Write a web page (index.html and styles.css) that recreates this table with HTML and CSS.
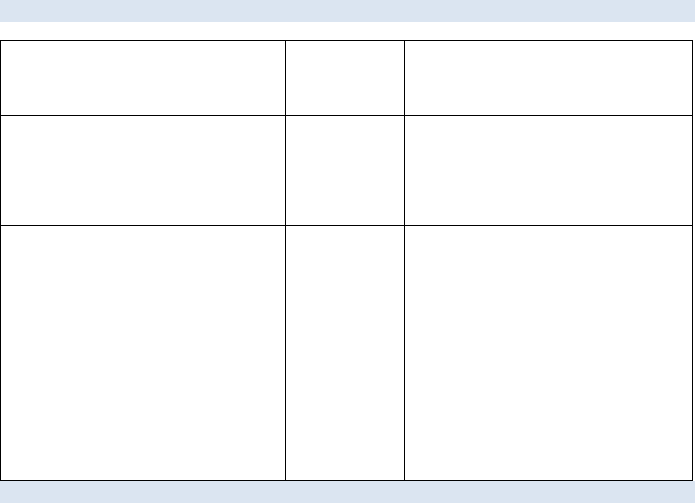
FILE: index.html
```html
<!DOCTYPE html>
<html>
<head>
<meta charset="utf-8">
<link rel="stylesheet" href="styles.css">
</head>
<body>
<div class="page">
  <div class="bar"></div>
  <main class="content">
    <table class="grid">
      <colgroup>
        <col class="c1"><col class="c2"><col class="c3">
      </colgroup>
      <tr class="r1"><td></td><td></td><td></td></tr>
      <tr class="r2"><td></td><td></td><td></td></tr>
      <tr class="r3"><td></td><td></td><td></td></tr>
    </table>
  </main>
  <div class="bar"></div>
</div>
</body>
</html>
```
FILE: styles.css
```css
html, body {
  margin: 0;
  padding: 0;
  background: #ffffff;
  font-family: "Liberation Sans", Arial, sans-serif;
}
.page {
  display: flex;
  flex-direction: column;
  height: 503px;
  width: 695px;
}
.bar {
  height: 22px;
  background: #dbe5f1;
  flex: none;
}
.content {
  flex: 1;
  padding-top: 18px;
}
.grid {
  border-collapse: collapse;
  table-layout: fixed;
  width: 693px;
}
.grid td {
  border: 1px solid #000;
  padding: 0;
}
.c1 { width: 285px; }
.c2 { width: 119px; }
.c3 { width: 288px; }
.r1 td { height: 74px; }
.r2 td { height: 109px; }
.r3 td { height: 254px; }
```
